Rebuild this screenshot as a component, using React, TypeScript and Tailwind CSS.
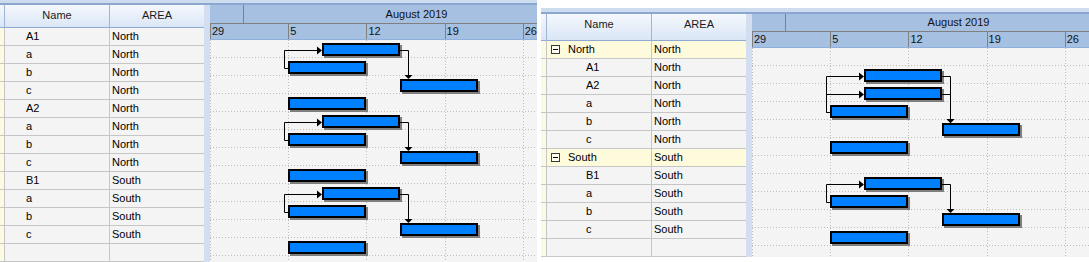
import React from "react";

// one day on the time scale, one grid row
const DW = 78.2 / 7;
const ROW = 18;

type Row = {
  name: string;
  area: string;
  pad: number;
  group?: boolean;
  bar?: [number, number]; // days counted from Jul 29
};

type Link = { from: number; to: number; kind: "ss" | "fs" };

const A: [number, number] = [10, 17];
const a: [number, number] = [7, 14];
const b: [number, number] = [17, 24];
const c: [number, number] = [7, 14];

const leftRows: Row[] = [
  { name: "A1", area: "North", pad: 21, bar: A },
  { name: "a", area: "North", pad: 21, bar: a },
  { name: "b", area: "North", pad: 21, bar: b },
  { name: "c", area: "North", pad: 21, bar: c },
  { name: "A2", area: "North", pad: 21, bar: A },
  { name: "a", area: "North", pad: 21, bar: a },
  { name: "b", area: "North", pad: 21, bar: b },
  { name: "c", area: "North", pad: 21, bar: c },
  { name: "B1", area: "South", pad: 21, bar: A },
  { name: "a", area: "South", pad: 21, bar: a },
  { name: "b", area: "South", pad: 21, bar: b },
  { name: "c", area: "South", pad: 21, bar: c },
  { name: "", area: "", pad: 21 },
];

const leftLinks: Link[] = [
  { from: 1, to: 0, kind: "ss" },
  { from: 0, to: 2, kind: "fs" },
  { from: 5, to: 4, kind: "ss" },
  { from: 4, to: 6, kind: "fs" },
  { from: 9, to: 8, kind: "ss" },
  { from: 8, to: 10, kind: "fs" },
];

const rightRows: Row[] = [
  { name: "North", area: "North", pad: 21, group: true },
  { name: "A1", area: "North", pad: 39, bar: A },
  { name: "A2", area: "North", pad: 39, bar: A },
  { name: "a", area: "North", pad: 39, bar: a },
  { name: "b", area: "North", pad: 39, bar: b },
  { name: "c", area: "North", pad: 39, bar: c },
  { name: "South", area: "South", pad: 21, group: true },
  { name: "B1", area: "South", pad: 39, bar: A },
  { name: "a", area: "South", pad: 39, bar: a },
  { name: "b", area: "South", pad: 39, bar: b },
  { name: "c", area: "South", pad: 39, bar: c },
  { name: "", area: "", pad: 21 },
];

const rightLinks: Link[] = [
  { from: 3, to: 1, kind: "ss" },
  { from: 3, to: 2, kind: "ss" },
  { from: 1, to: 4, kind: "fs" },
  { from: 2, to: 4, kind: "fs" },
  { from: 8, to: 7, kind: "ss" },
  { from: 7, to: 9, kind: "fs" },
];

const px = (d: number) => Math.round(d * DW);

function ExpandBox() {
  return (
    <svg width="9" height="9" className="mr-[8px] shrink-0">
      <rect x="0.5" y="0.5" width="8" height="8" fill="#fffef0" stroke="#3a3a3a" />
      <line x1="2" x2="7" y1="4.5" y2="4.5" stroke="#000" />
    </svg>
  );
}

function Chart({ rows, links }: { rows: Row[]; links: Link[] }) {
  const W = 420;
  const H = rows.length * ROW;
  const mid = (i: number) => i * ROW + 10.5;

  return (
    <svg width={W} height={H} className="block shrink-0">
      <rect width={W} height={H} fill="#f4f4f4" />

      {/* dotted grid */}
      {rows.map((_, i) => (
        <line key={"h" + i} x1={0} x2={W} y1={(i + 1) * ROW - 0.5} y2={(i + 1) * ROW - 0.5} stroke="#bdbdbd" strokeDasharray="1 2" />
      ))}
      {[0, 1, 2, 3, 4, 5].map((w) => (
        <line key={"v" + w} x1={px(w * 7) + 0.5} x2={px(w * 7) + 0.5} y1={0} y2={H} stroke="#bdbdbd" strokeDasharray="1 2" />
      ))}

      {/* bars */}
      {rows.map((r, i) => {
        if (!r.bar) return null;
        const x0 = px(r.bar[0]);
        const x1 = px(r.bar[1]);
        const y = i * ROW + 3;
        return (
          <g key={"b" + i}>
            <rect x={x0 + 2} y={y + 2} width={x1 - x0} height={13} fill="#7f7f7f" />
            <rect x={x0 + 1} y={y + 1} width={x1 - x0 - 2} height={11} fill="#0080ff" stroke="#000" strokeWidth={2} />
          </g>
        );
      })}

      {/* dependency links */}
      {links.map((l, k) => {
        const f = rows[l.from].bar!;
        const t = rows[l.to].bar!;
        if (l.kind === "ss") {
          const xs = px(f[0]);
          const xt = px(t[0]);
          const vx = Math.min(xs, xt) - 4 + 0.5;
          const yt = mid(l.to);
          return (
            <g key={"l" + k}>
              <path d={`M${xs} ${mid(l.from)} H${vx} V${yt} H${xt - 4}`} fill="none" stroke="#000" />
              <polygon points={`${xt},${yt} ${xt - 5},${yt - 4} ${xt - 5},${yt + 4}`} fill="#000" />
            </g>
          );
        }
        const xe = px(f[1]);
        const vx = xe + 8.5;
        const top = l.to * ROW + 3;
        return (
          <g key={"l" + k}>
            <path d={`M${xe} ${mid(l.from)} H${vx} V${top - 3}`} fill="none" stroke="#000" />
            <polygon points={`${vx},${top} ${vx - 4},${top - 4} ${vx + 4},${top - 4}`} fill="#000" />
          </g>
        );
      })}
    </svg>
  );
}

function GanttPanel({
  rows,
  links,
  className,
  lightClass,
  headerClass,
  topTierClass,
}: {
  rows: Row[];
  links: Link[];
  className: string;
  lightClass: string;
  headerClass: string;
  topTierClass: string;
}) {
  return (
    <div className={`flex shrink-0 flex-col overflow-hidden ${className}`}>
      <div className={`${lightClass} bg-[#cddcef]`} />
      <div className="h-[2px] bg-[#8ba7cf]" />

      <div className="flex min-h-0 flex-1">
        {/* grid */}
        <div className="flex w-[205px] shrink-0 flex-col">
          <div className={`flex ${headerClass} bg-linear-to-b from-[#f5f8fd] to-[#d9e5f5] text-[#1a1a1a]`}>
            <div className="w-[6px] border-r border-b border-r-[#9fb5d4] border-b-[#8eaad0]" />
            <div className="w-[105px] border-r border-b border-r-[#9fb5d4] border-b-[#8eaad0] pt-[4px] text-center">Name</div>
            <div className="w-[94px] border-b border-b-[#8eaad0] pt-[4px] text-center">AREA</div>
          </div>
          {rows.map((r, i) => (
            <div key={i} className={`flex h-[18px] shrink-0 ${r.group ? "bg-[#fefbdc]" : "bg-[#f4f4f4]"}`}>
              <div className="w-[6px] border-r border-b border-[#c6c6c6] bg-[#fcfae3]" />
              <div
                className="flex w-[105px] items-center border-r border-b border-[#c6c6c6] text-black"
                style={{ paddingLeft: r.group ? 4 : r.pad }}
              >
                {r.group && <ExpandBox />}
                {r.name}
              </div>
              <div className="flex w-[94px] items-center border-b border-[#c6c6c6] pl-[2px] text-black">{r.area}</div>
            </div>
          ))}
        </div>

        {/* splitter */}
        <div className="w-[6px] shrink-0 bg-[#d3dff0]" />

        {/* chart */}
        <div className="flex min-w-0 flex-1 flex-col overflow-hidden">
          <div className="flex w-[420px] flex-col bg-[#a6c0e2] text-[#111]">
            <div className={`flex ${topTierClass} border-b border-[#808080]`}>
              <div className="w-[33.5px] shrink-0 border-r border-[#808080]" />
              <div className="flex w-[346px] shrink-0 items-center justify-center">August 2019</div>
            </div>
            <div className="flex h-[16px] border-b border-[#8fb0dc]">
              {["29", "5", "12", "19", "26"].map((d) => (
                <div key={d} className="w-[78.2px] shrink-0 border-l border-[#808080] pl-[1px] leading-[15px]">
                  {d}
                </div>
              ))}
            </div>
          </div>
          <Chart rows={rows} links={links} />
        </div>
      </div>
    </div>
  );
}

export default function App() {
  return (
    <div className="flex h-[262px] w-[1089px] items-start overflow-hidden bg-white font-['Liberation_Sans',Arial,sans-serif] text-[11px] leading-[13px]">
      <GanttPanel
        rows={leftRows}
        links={leftLinks}
        className="ml-[-1px] h-[262px] w-[538px]"
        lightClass="h-[3px]"
        headerClass="h-[35px]"
        topTierClass="h-[19px]"
      />
      <GanttPanel
        rows={rightRows}
        links={rightLinks}
        className="mt-[8px] ml-[4px] h-[249px] w-[548px]"
        lightClass="h-[4px]"
        headerClass="h-[34px]"
        topTierClass="h-[18px]"
      />
    </div>
  );
}
